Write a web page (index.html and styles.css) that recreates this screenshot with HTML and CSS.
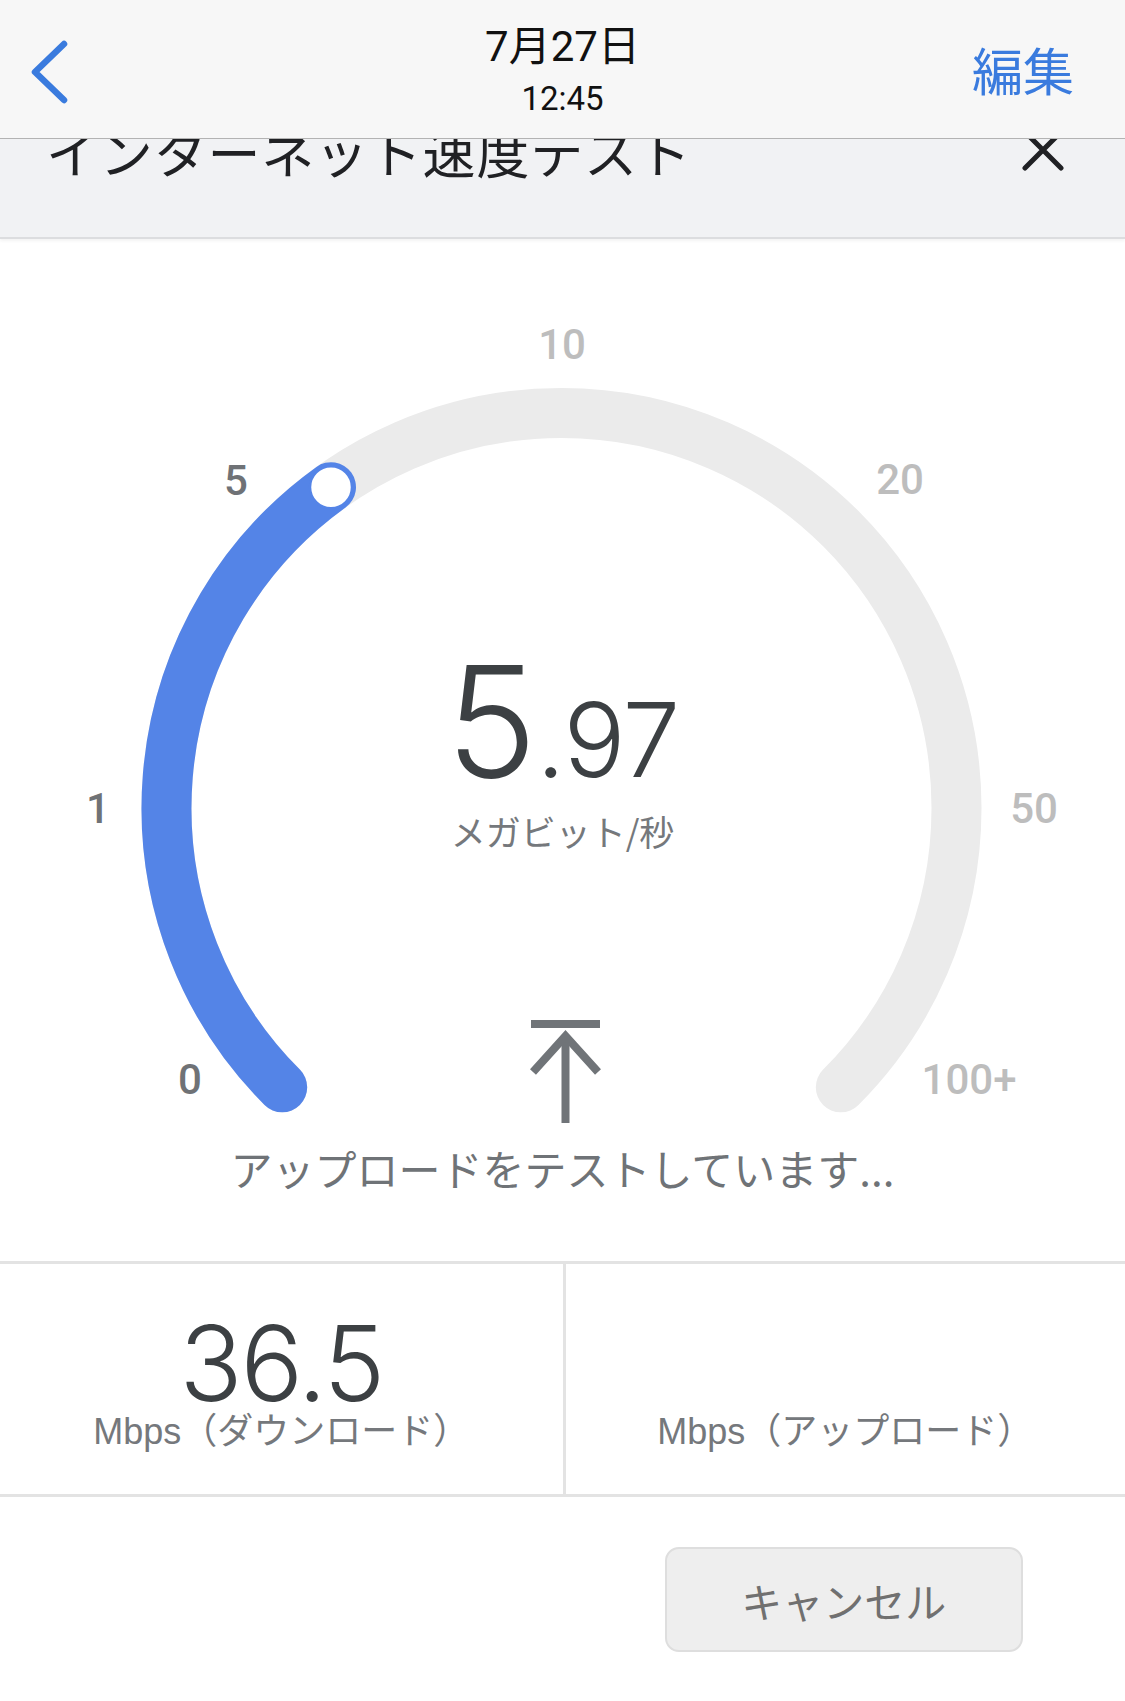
FILE: index.html
```html
<!DOCTYPE html>
<html lang="ja">
<head>
    <meta charset="UTF-8">
    <meta name="viewport" content="width=device-width, initial-scale=1.0">
    <title>インターネット速度テスト</title>
    <link rel="stylesheet" href="styles.css">
</head>
<body>

<header class="nav-bar">
    <div class="nav-left">
        <svg class="back-icon" width="40" height="64" viewBox="0 0 40 64">
            <path d="M35 4 L6 32 L35 60" fill="none" stroke="#3a7bde" stroke-width="6.5" stroke-linecap="round" stroke-linejoin="round"/>
        </svg>
    </div>
    <div class="nav-title">
        <div class="nav-date">7月27日</div>
        <div class="nav-time">12:45</div>
    </div>
    <div class="nav-right">
        <span class="nav-edit">編集</span>
    </div>
</header>

<section class="sheet-head">
    <h1 class="sheet-title">インターネット速度テスト</h1>
    <svg class="close-icon" width="44" height="44" viewBox="0 0 44 44">
        <path d="M4 4 L40 40 M40 4 L4 40" stroke="#202124" stroke-width="5" stroke-linecap="round"/>
    </svg>
</section>

<main class="gauge-panel">
    <div class="dial">
        <svg class="dial-art" width="1125" height="890" viewBox="0 0 1125 890">
            <!-- track: 270 degrees, center 561.5/569, r 395 -->
            <path d="M282.2 848.3 A395 395 0 1 1 840.8 848.3" fill="none" stroke="#ebebeb" stroke-width="50" stroke-linecap="round"/>
            <path d="M282.2 848.3 A395 395 0 0 1 331 248.2" fill="none" stroke="#5484e7" stroke-width="50" stroke-linecap="round"/>
            <circle cx="331" cy="248.2" r="21" fill="#fff" stroke="#5484e7" stroke-width="2.5"/>

            <g class="tick-labels">
                <text class="tick tick-done" x="190" y="855">0</text>
                <text class="tick tick-done" x="98" y="584">1</text>
                <text class="tick tick-done" x="236" y="256">5</text>
                <text class="tick" x="562" y="120">10</text>
                <text class="tick" x="900" y="255">20</text>
                <text class="tick" x="1034" y="584">50</text>
                <text class="tick" x="969" y="855">100+</text>
            </g>

            <!-- upload icon -->
            <g stroke="#707478" stroke-width="8" fill="none">
                <path d="M531 785 H600"/>
                <path d="M565.5 797 V884"/>
                <path d="M533 833 L565.5 797 L598 833" stroke-linejoin="miter"/>
            </g>
        </svg>
        <div class="readout">
            <div class="readout-value">5<span class="readout-frac">.97</span></div>
            <div class="readout-unit">メガビット/秒</div>
        </div>
    </div>
    <p class="status">アップロードをテストしています...</p>
</main>

<section class="stats">
    <div class="stat">
        <div class="stat-value">36.5</div>
        <div class="stat-label">Mbps（ダウンロード）</div>
    </div>
    <div class="stat stat-right">
        <div class="stat-label">Mbps（アップロード）</div>
    </div>
</section>

<section class="actions">
    <button class="cancel-btn" type="button">キャンセル</button>
</section>

</body>
</html>
```

FILE: styles.css
```css
* {
    box-sizing: border-box;
}

body {
    margin: 0;
    padding: 0;
    width: 1125px;
    background-color: #fff;
    font-family: 'Noto Sans CJK JP', sans-serif;
    color: #202124;
}

/* top navigation */
.nav-bar {
    height: 139px;
    background-color: #f7f7f7;
    border-bottom: 1px solid #b3b3b3;
    display: grid;
    grid-template-columns: 1fr auto 1fr;
    align-items: start;
}

.nav-left {
    padding: 40px 0 0 29px;
}

.back-icon {
    display: block;
}

.nav-title {
    display: flex;
    flex-direction: column;
    align-items: center;
    padding-top: 22px;
}

.nav-date {
    font-family: 'Roboto', 'Noto Sans CJK JP', sans-serif;
    font-size: 42px;
    line-height: 50px;
    color: #111;
}

.nav-time {
    font-family: 'Roboto', sans-serif;
    font-size: 33px;
    line-height: 40px;
    margin-top: 7px;
    color: #111;
}

.nav-right {
    display: flex;
    justify-content: flex-end;
    padding: 34px 51px 0 0;
}

.nav-edit {
    font-size: 51px;
    line-height: 70px;
    color: #3a7bde;
}

/* sheet header, partly under the nav */
.sheet-head {
    height: 100px;
    background-color: #f1f2f4;
    border-bottom: 2px solid #dcdddf;
    box-shadow: 0 2px 3px rgba(0, 0, 0, 0.05);
    overflow: hidden;
    display: flex;
    justify-content: space-between;
    align-items: flex-start;
    padding: 0 60px 0 46px;
}

.sheet-title {
    margin: -14px 0 0;
    font-size: 53px;
    font-weight: 400;
    line-height: 52px;
    letter-spacing: 0.8px;
    color: #202124;
}

.close-icon {
    margin-top: -11px;
    display: block;
}

/* gauge */
.gauge-panel {
    height: 1022px;
    display: flex;
    flex-direction: column;
    align-items: center;
}

.dial {
    display: grid;
    width: 1125px;
}

.dial > * {
    grid-area: 1 / 1;
}

.dial-art {
    display: block;
}

.tick {
    font-family: 'Roboto', sans-serif;
    font-size: 42px;
    font-weight: 500;
    text-anchor: middle;
    fill: #bdbdbd;
}

.tick-done {
    fill: #6f7276;
}

.readout {
    align-self: start;
    justify-self: center;
    margin-top: 405px;
    display: flex;
    flex-direction: column;
    align-items: center;
}

.readout-value {
    font-family: 'Inter', 'Roboto', sans-serif;
    font-weight: 300;
    font-size: 154px;
    line-height: 154px;
    letter-spacing: -1px;
    color: #3c4043;
}

.readout-frac {
    font-size: 103px;
    line-height: 1;
    letter-spacing: -1px;
}

.readout-unit {
    font-size: 35px;
    line-height: 40px;
    margin-top: 13px;
    color: #75787c;
}

.status {
    margin: 14px 0 0;
    font-size: 42px;
    line-height: 50px;
    color: #6f7377;
}

/* download / upload results */
.stats {
    display: grid;
    grid-template-columns: 1fr 1fr;
    border-top: 3px solid #e3e3e3;
    border-bottom: 3px solid #e3e3e3;
}

.stat {
    height: 230px;
    display: flex;
    flex-direction: column;
    justify-content: flex-end;
    align-items: center;
    padding-bottom: 41px;
}

.stat-right {
    border-left: 3px solid #e3e3e3;
}

.stat-value {
    font-family: 'Inter', 'Roboto', sans-serif;
    font-weight: 300;
    font-size: 104px;
    line-height: 88px;
    letter-spacing: -2px;
    color: #3c4043;
}

.stat-label {
    font-family: 'Liberation Sans', 'Noto Sans CJK JP', sans-serif;
    font-size: 36px;
    line-height: 42px;
    margin-top: 4px;
    color: #75787c;
}

/* cancel */
.actions {
    display: grid;
    grid-template-columns: 1fr 1fr;
    padding-top: 50px;
}

.cancel-btn {
    grid-column: 2;
    justify-self: center;
    width: 358px;
    height: 105px;
    background-color: #eeeeee;
    border: 2px solid #dedede;
    border-radius: 14px;
    font-family: 'Noto Sans CJK JP', sans-serif;
    font-size: 41px;
    color: #707070;
    cursor: pointer;
}
```
